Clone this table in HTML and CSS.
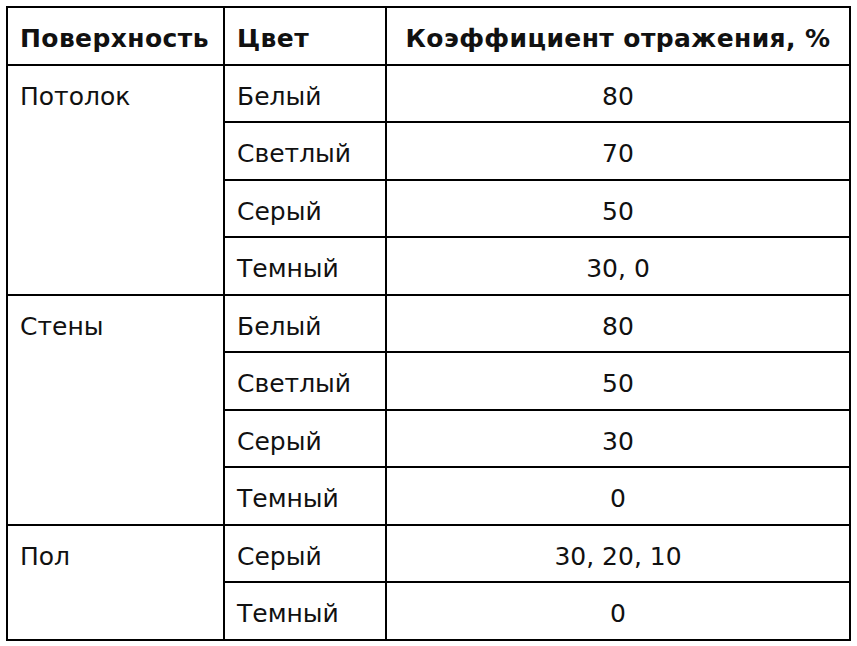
FILE: index.html
```html
<!DOCTYPE html>
<html lang="ru">
<head>
<meta charset="utf-8">
<title>Коэффициент отражения</title>
<link rel="stylesheet" href="styles.css">
</head>
<body>
<table class="refl">
  <colgroup>
    <col class="c1">
    <col class="c2">
    <col class="c3">
  </colgroup>
  <thead>
    <tr>
      <th>Поверхность</th>
      <th>Цвет</th>
      <th class="num">Коэффициент отражения, %</th>
    </tr>
  </thead>
  <tbody>
    <tr><td rowspan="4" class="surf">Потолок</td><td>Белый</td><td class="num">80</td></tr>
    <tr><td>Светлый</td><td class="num">70</td></tr>
    <tr><td>Серый</td><td class="num">50</td></tr>
    <tr><td>Темный</td><td class="num">30, 0</td></tr>
    <tr><td rowspan="4" class="surf">Стены</td><td>Белый</td><td class="num">80</td></tr>
    <tr><td>Светлый</td><td class="num">50</td></tr>
    <tr><td>Серый</td><td class="num">30</td></tr>
    <tr><td>Темный</td><td class="num">0</td></tr>
    <tr><td rowspan="2" class="surf">Пол</td><td>Серый</td><td class="num">30, 20, 10</td></tr>
    <tr><td>Темный</td><td class="num">0</td></tr>
  </tbody>
</table>
</body>
</html>
```

FILE: styles.css
```css
html, body {
  background: #fff;
}
body {
  margin: 6px 0 0 6px;
  font-family: "DejaVu Sans", Verdana, sans-serif;
  font-size: 25px;
  color: #111;
}
.refl {
  border-collapse: collapse;
  width: 845px;
}
.c1 { width: 217px; }
.c2 { width: 162px; }
.refl th,
.refl td {
  border: 2px solid #000;
  padding: 17px 12px 11px;
  line-height: 27.5px;
  text-align: left;
  vertical-align: middle;
}
.refl th {
  font-weight: bold;
  letter-spacing: 0.4px;
}
.refl .num {
  text-align: center;
}
.refl .surf {
  vertical-align: top;
}
```
